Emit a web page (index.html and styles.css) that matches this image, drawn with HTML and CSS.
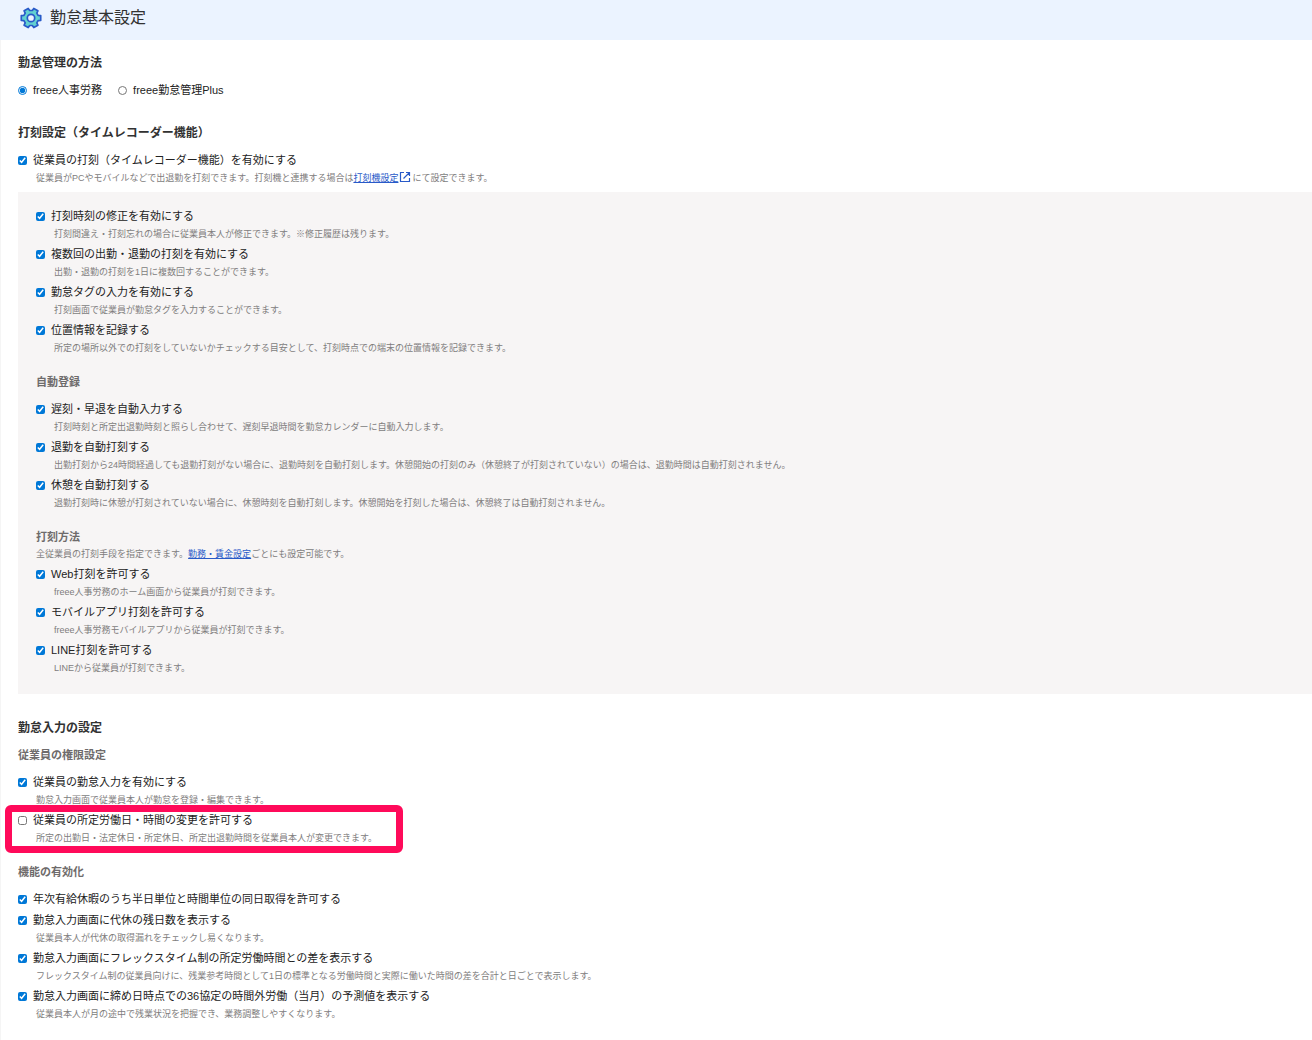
FILE: index.html
```
<!DOCTYPE html>
<html lang="ja">
<head>
  <meta charset="UTF-8" />
  <title>勤怠基本設定</title>
  <meta name="viewport" content="width=device-width, initial-scale=1" />
  <link rel="stylesheet" href="styles.css">
</head>
<body>

  <header class="page-header">
    <svg class="gear" viewBox="0 0 22 22" aria-hidden="true">
      <path d="M18.1 8.4L20.7 8.6V13.4L18.1 13.6L16.8 15.9L17.9 18.2L13.8 20.6L12.3 18.5H9.7L8.2 20.6L4.1 18.2L5.2 15.9L3.9 13.6L1.3 13.4V8.6L3.9 8.4L5.2 6.1L4.1 3.8L8.2 1.4L9.7 3.5H12.3L13.8 1.4L17.9 3.8L16.8 6.1Z" />
      <circle cx="11" cy="11" r="3.7" />
    </svg>
    <h1>勤怠基本設定</h1>
  </header>

  <main>
    <section>
      <h2>勤怠管理の方法</h2>
      <div class="radios">
        <label class="check"><input type="radio" name="method" checked>freee人事労務</label>
        <label class="check"><input type="radio" name="method">freee勤怠管理Plus</label>
      </div>
    </section>

    <section>
      <h2>打刻設定（タイムレコーダー機能）</h2>
      <div class="item">
        <label class="check"><input type="checkbox" checked>従業員の打刻（タイムレコーダー機能）を有効にする</label>
        <p class="desc">従業員がPCやモバイルなどで出退勤を打刻できます。打刻機と連携する場合は<a href="#">打刻機設定</a><svg class="external" viewBox="0 0 12 12" aria-hidden="true"><path d="M5 1.5H1.5V10.5H10.5V7M7 1.5H10.5V5M10.5 1.5L4.5 7.5" /></svg>にて設定できます。</p>
      </div>

      <div class="panel">
        <ul class="list">
          <li class="item">
            <label class="check"><input type="checkbox" checked>打刻時刻の修正を有効にする</label>
            <p class="desc">打刻間違え・打刻忘れの場合に従業員本人が修正できます。※修正履歴は残ります。</p>
          </li>
          <li class="item">
            <label class="check"><input type="checkbox" checked>複数回の出勤・退勤の打刻を有効にする</label>
            <p class="desc">出勤・退勤の打刻を1日に複数回することができます。</p>
          </li>
          <li class="item">
            <label class="check"><input type="checkbox" checked>勤怠タグの入力を有効にする</label>
            <p class="desc">打刻画面で従業員が勤怠タグを入力することができます。</p>
          </li>
          <li class="item">
            <label class="check"><input type="checkbox" checked>位置情報を記録する</label>
            <p class="desc">所定の場所以外での打刻をしていないかチェックする目安として、打刻時点での端末の位置情報を記録できます。</p>
          </li>
        </ul>

        <h3>自動登録</h3>
        <ul class="list">
          <li class="item">
            <label class="check"><input type="checkbox" checked>遅刻・早退を自動入力する</label>
            <p class="desc">打刻時刻と所定出退勤時刻と照らし合わせて、遅刻早退時間を勤怠カレンダーに自動入力します。</p>
          </li>
          <li class="item">
            <label class="check"><input type="checkbox" checked>退勤を自動打刻する</label>
            <p class="desc">出勤打刻から24時間経過しても退勤打刻がない場合に、退勤時刻を自動打刻します。休憩開始の打刻のみ（休憩終了が打刻されていない）の場合は、退勤時間は自動打刻されません。</p>
          </li>
          <li class="item">
            <label class="check"><input type="checkbox" checked>休憩を自動打刻する</label>
            <p class="desc">退勤打刻時に休憩が打刻されていない場合に、休憩時刻を自動打刻します。休憩開始を打刻した場合は、休憩終了は自動打刻されません。</p>
          </li>
        </ul>

        <h3 class="with-lead">打刻方法</h3>
        <p class="lead">全従業員の打刻手段を指定できます。<a href="#">勤務・賃金設定</a>ごとにも設定可能です。</p>
        <ul class="list">
          <li class="item">
            <label class="check"><input type="checkbox" checked>Web打刻を許可する</label>
            <p class="desc">freee人事労務のホーム画面から従業員が打刻できます。</p>
          </li>
          <li class="item">
            <label class="check"><input type="checkbox" checked>モバイルアプリ打刻を許可する</label>
            <p class="desc">freee人事労務モバイルアプリから従業員が打刻できます。</p>
          </li>
          <li class="item">
            <label class="check"><input type="checkbox" checked>LINE打刻を許可する</label>
            <p class="desc">LINEから従業員が打刻できます。</p>
          </li>
        </ul>
      </div>
    </section>

    <section>
      <h2>勤怠入力の設定</h2>
      <h3 class="first">従業員の権限設定</h3>
      <ul class="list">
        <li class="item">
          <label class="check"><input type="checkbox" checked>従業員の勤怠入力を有効にする</label>
          <p class="desc">勤怠入力画面で従業員本人が勤怠を登録・編集できます。</p>
        </li>
        <li class="item highlight">
          <label class="check"><input type="checkbox">従業員の所定労働日・時間の変更を許可する</label>
          <p class="desc">所定の出勤日・法定休日・所定休日、所定出退勤時間を従業員本人が変更できます。</p>
        </li>
      </ul>

      <h3>機能の有効化</h3>
      <ul class="list">
        <li class="item">
          <label class="check"><input type="checkbox" checked>年次有給休暇のうち半日単位と時間単位の同日取得を許可する</label>
        </li>
        <li class="item">
          <label class="check"><input type="checkbox" checked>勤怠入力画面に代休の残日数を表示する</label>
          <p class="desc">従業員本人が代休の取得漏れをチェックし易くなります。</p>
        </li>
        <li class="item">
          <label class="check"><input type="checkbox" checked>勤怠入力画面にフレックスタイム制の所定労働時間との差を表示する</label>
          <p class="desc">フレックスタイム制の従業員向けに、残業参考時間として1日の標準となる労働時間と実際に働いた時間の差を合計と日ごとで表示します。</p>
        </li>
        <li class="item">
          <label class="check"><input type="checkbox" checked>勤怠入力画面に締め日時点での36協定の時間外労働（当月）の予測値を表示する</label>
          <p class="desc">従業員本人が月の途中で残業状況を把握でき、業務調整しやすくなります。</p>
        </li>
      </ul>
    </section>
  </main>

</body>
</html>
```
FILE: styles.css
```
* {
  box-sizing: border-box;
}
body {
  margin: 0;
  background: #fff;
  color: #222;
  font-family: "Liberation Sans", "Noto Sans CJK JP", sans-serif;
  font-size: 11px;
  line-height: 18px;
}
h1, h2, h3, p, ul {
  margin: 0;
  padding: 0;
}
ul {
  list-style: none;
}
a {
  color: #285ac8;
}
.page-header {
  display: flex;
  align-items: center;
  gap: 8px;
  height: 40px;
  padding: 0 20px 4px;
  background: #ebf3ff;
}
.page-header h1 {
  font-size: 16px;
  font-weight: normal;
  line-height: 24px;
  color: #323232;
}
.gear {
  width: 22px;
  height: 22px;
  stroke: #285ac8;
  stroke-width: 1.7;
  stroke-linejoin: round;
  fill: #62d0d0;
}
.gear circle {
  fill: #ebf3ff;
}
main {
  padding: 13px 0 18px 17px;
  border-left: 1px solid #f5f5f5;
}
section + section {
  margin-top: 24px;
}
h2 {
  margin-bottom: 8px;
  font-size: 12px;
  line-height: 20px;
  color: #323232;
}
h3 {
  margin: 17px 0 9px;
  font-size: 11px;
  color: #6e6b6b;
}
h3.first {
  margin-top: 0;
}
h3.with-lead {
  margin-bottom: 0;
}
.radios {
  display: flex;
  gap: 16px;
}
.list {
  display: flex;
  flex-direction: column;
  gap: 3px;
}
.check {
  display: flex;
  align-items: center;
  gap: 6px;
  width: fit-content;
}
.check input {
  width: 9px;
  height: 9px;
  margin: 0;
  accent-color: #0078d7;
}
.desc, .lead {
  font-size: 9px;
  line-height: 15px;
  color: #807d7d;
}
.desc {
  padding: 2px 0 0 18px;
}
.lead {
  padding-top: 1px;
  margin-bottom: 3px;
}
.external {
  width: 12px;
  height: 12px;
  margin: 0 1px;
  vertical-align: -2px;
  fill: none;
  stroke: #285ac8;
  stroke-width: 1.2;
}
.panel {
  margin-top: 6px;
  padding: 15px 18px 18px;
  background: #f7f5f5;
}
.highlight {
  position: relative;
  width: fit-content;
}
.highlight::after {
  content: "";
  position: absolute;
  inset: -6px -26px -7px -13px;
  border: 7px solid #ff0a5a;
  border-radius: 6px;
  pointer-events: none;
}
```
